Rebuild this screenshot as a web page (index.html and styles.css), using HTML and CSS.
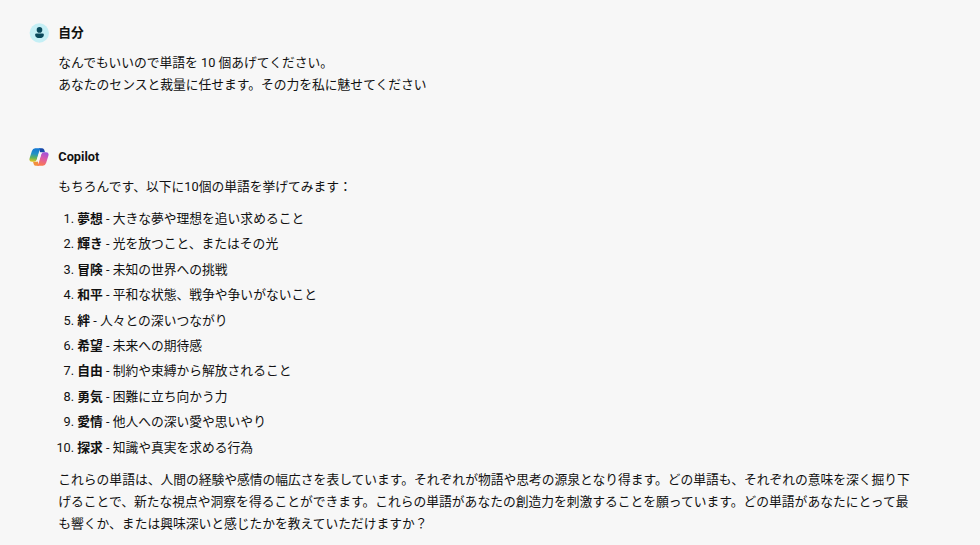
FILE: index.html
```html
<!DOCTYPE html>
<html lang="ja">
<head>
  <meta charset="UTF-8">
  <meta name="viewport" content="width=device-width, initial-scale=1.0">
  <title>Copilot</title>
  <link rel="stylesheet" href="styles.css">
</head>
<body>
  <main class="chat">
    <section class="message user-message">
      <header class="message-header">
        <svg class="avatar" viewBox="0 0 20 20">
          <circle cx="10.300" cy="10" r="9.700" fill="#c5eff5"/>
          <circle cx="10.500" cy="6.900" r="2.800" fill="#0b4a5c"/>
          <path d="M7.300 10.500h6.400a1.200 1.200 0 0 1 1.200 1.200c0 2.200-1.800 3.400-4.400 3.400s-4.400-1.200-4.400-3.400a1.200 1.200 0 0 1 1.200-1.200z" fill="#0b4a5c"/>
        </svg>
        <h2>自分</h2>
      </header>
      <div class="message-body">
        <p>なんでもいいので単語を 10 個あげてください。<br>あなたのセンスと裁量に任せます。その力を私に魅せてください</p>
      </div>
    </section>

    <section class="message">
      <header class="message-header">
        <svg class="avatar" viewBox="0 0 20 20">
          <defs>
            <linearGradient id="left" x1=".3" y1="0" x2=".2" y2="1">
              <stop offset="0" stop-color="#1478d4"/>
              <stop offset=".4" stop-color="#2292c4"/>
              <stop offset=".7" stop-color="#62b35a"/>
              <stop offset="1" stop-color="#f0c81e"/>
            </linearGradient>
            <linearGradient id="right" x1=".8" y1="0" x2=".5" y2="1">
              <stop offset="0" stop-color="#9a50e0"/>
              <stop offset=".5" stop-color="#dc5aa8"/>
              <stop offset="1" stop-color="#fb7a50"/>
            </linearGradient>
          </defs>
          <!-- folded ends behind the two ribbons -->
          <path d="M10 1.200h3.200q1.500 0 2 1.500l.8 2.600h-2.200q-1.600 0-2.200 1.700z" fill="#1947a8"/>
          <path d="M10 18.800H6.800q-1.500 0-2-1.500L4 14.700h2.200q1.600 0 2.200-1.700z" fill="#f2903c"/>
          <path d="M6.200 1.200h6q-1.200.3-1.700 2L7.700 12.800q-.7 2-2.500 2H3Q-.3 14.800.6 11.300L2.900 4Q3.800 1.200 6.200 1.200z" fill="url(#left)"/>
          <path d="M13.800 18.800h-6q1.200-.3 1.700-2l2.800-9.600q.7-2 2.500-2H17q3.300 0 2.400 3.500L17.100 16q-.9 2.800-3.300 2.800z" fill="url(#right)"/>
          <path d="M11.100 5.200h2.500q-1.200.6-1.600 2l-1.500 5.100q-.7 2.500-2.700 2.500H6.600q1-.5 1.400-2l1.600-5.400q.5-1.700 1.500-2.200z" fill="#f7f7f7"/>
        </svg>
        <h2>Copilot</h2>
      </header>
      <div class="message-body">
        <p>もちろんです、以下に10個の単語を挙げてみます：</p>
        <ol class="word-list">
          <li><strong>夢想</strong> - 大きな夢や理想を追い求めること</li>
          <li><strong>輝き</strong> - 光を放つこと、またはその光</li>
          <li><strong>冒険</strong> - 未知の世界への挑戦</li>
          <li><strong>和平</strong> - 平和な状態、戦争や争いがないこと</li>
          <li><strong>絆</strong> - 人々との深いつながり</li>
          <li><strong>希望</strong> - 未来への期待感</li>
          <li><strong>自由</strong> - 制約や束縛から解放されること</li>
          <li><strong>勇気</strong> - 困難に立ち向かう力</li>
          <li><strong>愛情</strong> - 他人への深い愛や思いやり</li>
          <li><strong>探求</strong> - 知識や真実を求める行為</li>
        </ol>
        <p>これらの単語は、人間の経験や感情の幅広さを表しています。それぞれが物語や思考の源泉となり得ます。どの単語も、それぞれの意味を深く掘り下げることで、新たな視点や洞察を得ることができます。これらの単語があなたの創造力を刺激することを願っています。どの単語があなたにとって最も響くか、または興味深いと感じたかを教えていただけますか？</p>
      </div>
    </section>
  </main>
</body>
</html>
```
FILE: styles.css
```css
body {
  margin: 0;
  background: #f7f7f7;
  color: #111;
  font-family: Roboto, "Noto Sans CJK JP", sans-serif;
  font-size: 12.780px;
  line-height: 22px;
  overflow: hidden;
}
.chat {
  padding: 22px 64px 0 29px;
}
.user-message {
  margin-bottom: 50px;
}
.message-header {
  display: flex;
  align-items: center;
  gap: 9.300px;
  height: 22px;
  margin-bottom: 8px;
}
.avatar {
  width: 20px;
  height: 20px;
}
h2 {
  margin: 0;
  font-size: 12.780px;
  font-weight: 700;
}
.message-body {
  padding-left: 29.300px;
}
.message-body p {
  margin: 0;
}
.word-list {
  margin: 9.800px 0 10.200px;
  padding-left: 19px;
}
.word-list li {
  margin-bottom: 3.450px;
}
```
